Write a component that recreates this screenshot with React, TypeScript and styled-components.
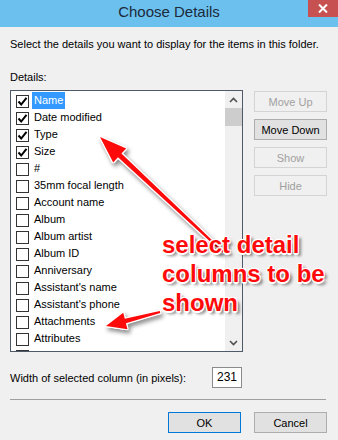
import styled, { createGlobalStyle } from "styled-components";
import React from "react";

const GlobalStyle = createGlobalStyle`
    html, body {
        margin: 0;
        padding: 0;
        background: #f0f0f0;
    }
    body {
        font-family: "Liberation Sans", Arial, sans-serif;
        font-size: 11px;
        color: #000;
    }
`;

type Item = { name: string; checked?: boolean; selected?: boolean };

const items: Item[] = [
    { name: "Name", checked: true, selected: true },
    { name: "Date modified", checked: true },
    { name: "Type", checked: true },
    { name: "Size", checked: true },
    { name: "#" },
    { name: "35mm focal length" },
    { name: "Account name" },
    { name: "Album" },
    { name: "Album artist" },
    { name: "Album ID" },
    { name: "Anniversary" },
    { name: "Assistant's name" },
    { name: "Assistant's phone" },
    { name: "Attachments" },
    { name: "Attributes" },
];

function Check() {
    return (
        <svg width="11" height="11" viewBox="0 0 11 11">
            <path d="M1.5 5.5 L4.2 8.5 L9.5 1.8" fill="none" stroke="#000" strokeWidth="2" />
        </svg>
    );
}

function Chevron({ down }: { down?: boolean }) {
    return (
        <svg width="9" height="6" viewBox="0 0 9 6">
            <path d={down ? "M1 1 L4.5 4.5 L8 1" : "M1 5 L4.5 1.5 L8 5"} fill="none" stroke="#505050" strokeWidth="1.6" />
        </svg>
    );
}

// red annotation arrow: tapered shaft + head, from tail to tip
function Arrow({ tx, ty, hx, hy, head, width }: { tx: number; ty: number; hx: number; hy: number; head: number; width: number }) {
    const len = Math.hypot(tx - hx, ty - hy);
    const dx = (tx - hx) / len;
    const dy = (ty - hy) / len;
    const px = -dy;
    const py = dx;
    const bx = hx + dx * head;
    const by = hy + dy * head;
    const hw = width * 1.9;
    const sw = width / 2;
    const pts = [
        [hx, hy],
        [bx + px * hw, by + py * hw],
        [bx + px * sw, by + py * sw],
        [tx + px * 1, ty + py * 1],
        [tx - px * 1, ty - py * 1],
        [bx - px * sw, by - py * sw],
        [bx - px * hw, by - py * hw],
    ]
        .map((p) => p.join(","))
        .join(" ");
    return <polygon points={pts} fill="#ff0a0a" />;
}

export default function App() {
    return (
        <Window>
            <GlobalStyle />
            <TitleBar>
                <span />
                <Title>Choose Details</Title>
                <CloseButton>
                    <svg width="10" height="9" viewBox="0 0 10 9">
                        <path d="M1 0.5 L9 8.5 M9 0.5 L1 8.5" stroke="#fff" strokeWidth="2" />
                    </svg>
                </CloseButton>
            </TitleBar>

            <Body>
                <Intro>Select the details you want to display for the items in this folder.</Intro>
                <Label>Details:</Label>

                <MainRow>
                    <ListBox>
                        <Rows>
                            {items.map((item) => (
                                <Row key={item.name}>
                                    <CheckBox>{item.checked && <Check />}</CheckBox>
                                    <RowText $selected={item.selected}>{item.name}</RowText>
                                </Row>
                            ))}
                            {/* next row scrolled just out of view, only its box peeks in */}
                            <Row>
                                <CheckBox />
                            </Row>
                        </Rows>
                        <ScrollBar>
                            <ScrollArrow><Chevron /></ScrollArrow>
                            <Thumb />
                            <Track />
                            <ScrollArrow><Chevron down /></ScrollArrow>
                        </ScrollBar>
                    </ListBox>

                    <SideButtons>
                        <Button disabled>Move Up</Button>
                        <Button>Move Down</Button>
                        <Button disabled>Show</Button>
                        <Button disabled>Hide</Button>
                    </SideButtons>
                </MainRow>

                <WidthRow>
                    <span>Width of selected column (in pixels):</span>
                    <WidthInput>231</WidthInput>
                </WidthRow>

                <Separator />

                <Footer>
                    <Button $primary>OK</Button>
                    <Button>Cancel</Button>
                </Footer>
            </Body>

            <Annotation>
                <svg width="338" height="440" viewBox="0 0 338 440">
                    <Arrow tx={223} ty={252} hx={100} hy={137} head={27} width={5} />
                    <Arrow tx={160} ty={312} hx={106} hy={326} head={20} width={4.5} />
                </svg>
                <Note>select detail<br />columns to be<br />shown</Note>
            </Annotation>
        </Window>
    );
}

const Window = styled.div`
    position: relative;
    width: 338px;
    height: 440px;
    overflow: hidden;
    background: #f0f0f0;
    display: flex;
    flex-direction: column;
`;

const TitleBar = styled.div`
    display: grid;
    grid-template-columns: 30px 1fr 30px;
    height: 27px;
    background: #6bc0ee;
`;

const Title = styled.div`
    text-align: center;
    font-size: 15px;
    line-height: 24px;
    color: #1c2a3a;
`;

const CloseButton = styled.div`
    display: flex;
    align-items: center;
    justify-content: center;
    height: 17px;
    background: #c75050;
`;

const Body = styled.div`
    display: flex;
    flex-direction: column;
    padding: 0 11px 0 10px;
`;

const Intro = styled.div`
    margin-top: 9px;
    line-height: 16px;
    white-space: nowrap;
`;

const Label = styled.div`
    margin-top: 17px;
    line-height: 16px;
`;

const MainRow = styled.div`
    display: flex;
    margin-top: 5px;
`;

const ListBox = styled.div`
    display: flex;
    width: 233px;
    height: 262px;
    box-sizing: border-box;
    border: 1px solid #4e5a68;
    background: #fff;
`;

const Rows = styled.div`
    flex: 1;
    overflow: hidden;
    padding-top: 1px;
`;

const Row = styled.div`
    display: flex;
    align-items: center;
    height: 17px;
    padding-left: 5px;
`;

const CheckBox = styled.div`
    display: flex;
    align-items: center;
    justify-content: center;
    width: 13px;
    height: 13px;
    box-sizing: border-box;
    border: 1px solid #333;
    background: #fff;
    margin-top: 1px;
`;

const RowText = styled.div<{ $selected?: boolean }>`
    margin-left: 3px;
    padding: 0 2px;
    height: 17px;
    line-height: 17px;
    white-space: nowrap;
    background: ${(p) => (p.$selected ? "#3399ff" : "transparent")};
    color: ${(p) => (p.$selected ? "#fff" : "#000")};
`;

const ScrollBar = styled.div`
    display: flex;
    flex-direction: column;
    width: 17px;
    background: #f0f0f0;
`;

const ScrollArrow = styled.div`
    display: flex;
    align-items: center;
    justify-content: center;
    height: 17px;
`;

const Thumb = styled.div`
    height: 18px;
    background: #cdcdcd;
`;

const Track = styled.div`
    flex: 1;
`;

const SideButtons = styled.div`
    display: flex;
    flex-direction: column;
    gap: 7px;
    margin-left: 11px;
    margin-top: 1px;
`;

const Button = styled.button<{ $primary?: boolean }>`
    width: 73px;
    height: 21px;
    box-sizing: border-box;
    padding: 0;
    font-family: "Liberation Sans", Arial, sans-serif;
    font-size: 11px;
    color: #000;
    background: #e1e1e1;
    border: 1px solid ${(p) => (p.$primary ? "#0078d7" : "#adadad")};
    border-radius: 0;

    &:disabled {
        color: #a0a0a0;
        background: #f0f0f0;
        border-color: #d4d4d4;
    }
`;

const WidthRow = styled.div`
    display: flex;
    align-items: center;
    justify-content: space-between;
    width: 232px;
    margin-top: 15px;
`;

const WidthInput = styled.div`
    width: 30px;
    height: 21px;
    box-sizing: border-box;
    border: 1px solid #8a8a8a;
    background: #fff;
    text-align: center;
    line-height: 19px;
    font-size: 12px;
`;

const Separator = styled.div`
    height: 1px;
    width: 316px;
    margin-top: 11px;
    background: #a0a0a0;
`;

const Footer = styled.div`
    display: flex;
    justify-content: flex-end;
    gap: 13px;
    margin-top: 12px;
`;

const Annotation = styled.div`
    position: absolute;
    inset: 0;
    pointer-events: none;

    svg {
        position: absolute;
        left: 0;
        top: 0;
        filter: drop-shadow(1px 0 0 #fff) drop-shadow(-1px 0 0 #fff) drop-shadow(0 1px 0 #fff) drop-shadow(0 -1px 0 #fff) drop-shadow(2px 3px 2px rgba(0, 0, 0, 0.45));
    }
`;

const Note = styled.div`
    position: absolute;
    left: 162px;
    top: 230px;
    font-family: "Liberation Sans", Arial, sans-serif;
    font-weight: bold;
    font-size: 24px;
    line-height: 29px;
    color: #ff0a0a;
    white-space: nowrap;
    text-shadow: -1px -1px 0 #fff, 1px -1px 0 #fff, -1px 1px 0 #fff, 1px 1px 0 #fff, 0 -1.5px 0 #fff, 0 1.5px 0 #fff, 3px 3px 3px rgba(0, 0, 0, 0.5);
`;
